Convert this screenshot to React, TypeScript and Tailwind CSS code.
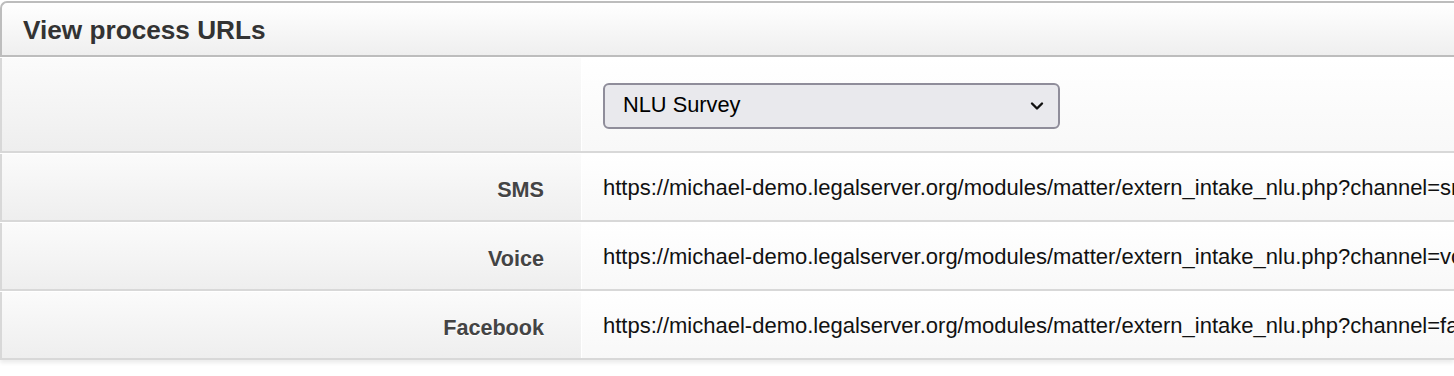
const url = "https://michael-demo.legalserver.org/modules/matter/extern_intake_nlu.php?channel=";

const rows = [
  { label: "SMS", value: url + "sms" },
  { label: "Voice", value: url + "voice" },
  { label: "Facebook", value: url + "facebook" },
];

const labelCls =
  "w-[579px] shrink-0 flex items-center justify-end pr-[37px] pt-[6px] font-bold text-[21.6px] text-[#444] bg-gradient-to-b from-[#fbfbfb] to-[#eeeeee] [text-shadow:0_1px_0_#fff]";

const App = () => {
  return (
    <div
      className="w-[1454px] h-[376px] overflow-hidden bg-white pt-[1px]"
      style={{ fontFamily: '"Liberation Sans", Arial, sans-serif' }}
    >
      <div className="h-[56px] border-t-2 border-l-2 border-b-2 border-[#bdbdbd] rounded-tl-[7px] bg-gradient-to-b from-white to-[#efefef] flex items-center pl-[21px] pt-[2px]">
        <h2 className="font-bold text-[26.2px] text-[#333] leading-none">View process URLs</h2>
      </div>

      <div className="mt-[1px] flex flex-col gap-[1px] shadow-[0_3px_4px_rgba(0,0,0,0.08)]">
        <div className="h-[95px] flex border-l-2 border-b-2 border-[#d8d8d8]">
          <div className={labelCls}></div>
          <div className="flex-1 ml-[1px] bg-gradient-to-b from-white to-[#f8f8f8] flex items-center pl-[21px] pt-[2px]">
            <div className="w-[457px] h-[46px] rounded-[6px] border-2 border-[#8f8d9a] bg-[#e9e9ed] flex items-center justify-between pl-[18px] pr-[14px] text-[21.8px] text-black">
              <span>NLU Survey</span>
              <svg width="14" height="10" viewBox="0 0 14 10" fill="none">
                <path d="M2 2.5 L7 7.5 L12 2.5" stroke="#111" strokeWidth="2.4" strokeLinecap="round" strokeLinejoin="round" />
              </svg>
            </div>
          </div>
        </div>
        {rows.map((r) => (
          <div key={r.label} className="h-[68px] flex border-l-2 border-b-2 border-[#d8d8d8]">
            <div className={labelCls}>{r.label}</div>
            <div className="flex-1 min-w-0 ml-[1px] bg-gradient-to-b from-white to-[#f8f8f8] flex items-center pl-[21px] pt-[1px] overflow-hidden whitespace-nowrap text-[22px] text-[#111]">
              {r.value}
            </div>
          </div>
        ))}
      </div>
    </div>
  );
};

export default App;
